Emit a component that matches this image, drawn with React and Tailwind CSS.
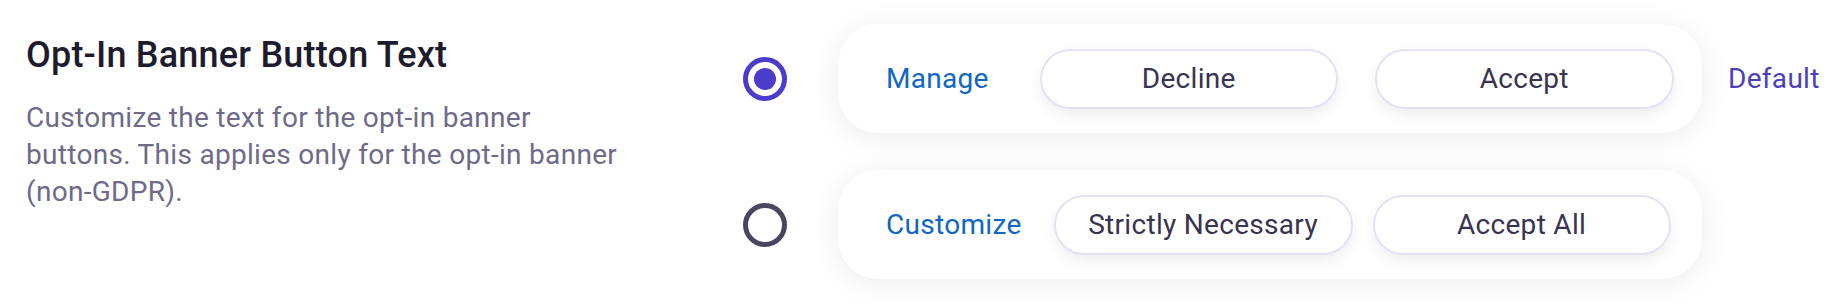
import React from 'react';

function Radio({ checked }) {
  return checked ? (
    <div className="w-[44px] h-[44px] rounded-full border-[5px] border-[#4b3ccc] flex items-center justify-center shrink-0">
      <div className="w-[22px] h-[22px] rounded-full bg-[#4b3ccc]" />
    </div>
  ) : (
    <div className="w-[44px] h-[44px] rounded-full border-[5px] border-[#4a4660] shrink-0" />
  );
}

function Pill({ children, className }) {
  return (
    <div
      className={
        'h-[60px] rounded-full border-2 border-[#e6e0f3] bg-white flex items-center justify-center text-[28px] tracking-[0.3px] text-[#383350] shadow-[0_6px_14px_rgba(0,0,0,0.07)] shrink-0 ' +
        className
      }
    >
      {children}
    </div>
  );
}

export default function App() {
  return (
    <div className="w-[1840px] h-[304px] bg-white flex font-['Roboto',sans-serif]">
      <div className="w-[743px] shrink-0 pl-[26px] pt-[33px]">
        <h2 className="text-[36px] leading-[44px] font-medium tracking-[0.2px] text-[#1d1b2e]">Opt-In Banner Button Text</h2>
        <p className="mt-[22px] max-w-[600px] text-[28px] leading-[37px] tracking-[0.3px] text-[#6e6a88]">
          Customize the text for the opt-in banner buttons. This applies only for the opt-in banner (non-GDPR).
        </p>
      </div>

      <div className="flex flex-col gap-[37px] pt-[24px]">
        <div className="flex items-center">
          <Radio checked />
          <div className="ml-[51px] w-[864px] h-[109px] rounded-[40px] bg-white shadow-[0_4px_30px_rgba(0,0,0,0.08)] flex items-center pl-[48px]">
            <span className="text-[28px] tracking-[0.3px] text-[#0f66c4]">Manage</span>
            <Pill className="ml-[51px] w-[298px]">Decline</Pill>
            <Pill className="ml-[37px] w-[299px]">Accept</Pill>
          </div>
          <span className="ml-[26px] text-[28px] tracking-[0.3px] text-[#4b3fbd]">Default</span>
        </div>

        <div className="flex items-center">
          <Radio />
          <div className="ml-[51px] w-[864px] h-[109px] rounded-[40px] bg-white shadow-[0_4px_30px_rgba(0,0,0,0.08)] flex items-center pl-[48px]">
            <span className="text-[28px] tracking-[0.3px] text-[#0f66c4]">Customize</span>
            <Pill className="ml-[32px] w-[299px]">Strictly Necessary</Pill>
            <Pill className="ml-[20px] w-[298px]">Accept All</Pill>
          </div>
        </div>
      </div>
    </div>
  );
}
